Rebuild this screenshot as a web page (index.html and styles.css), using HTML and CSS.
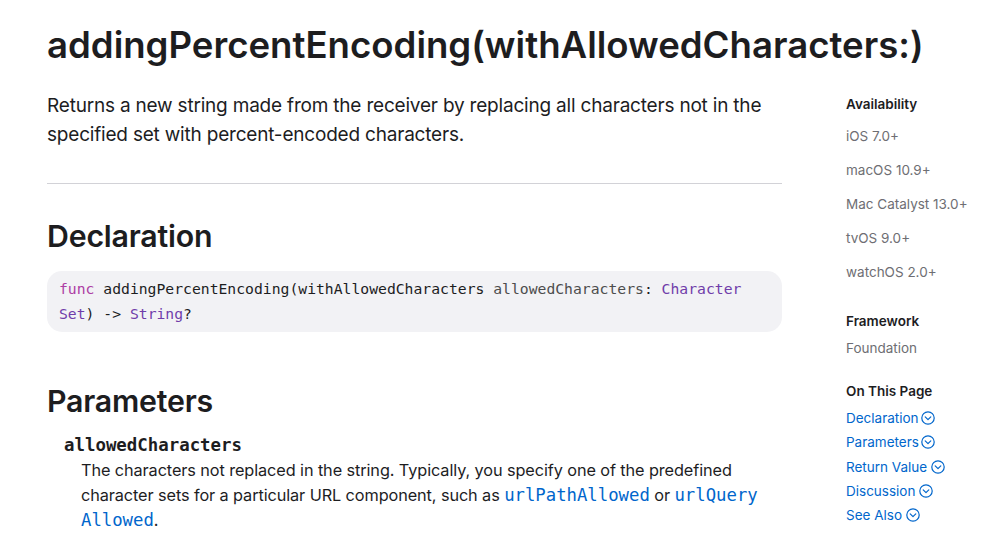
FILE: index.html
```html
<!DOCTYPE html>
<html lang="en">
<head>
<meta charset="utf-8">
<title>addingPercentEncoding(withAllowedCharacters:)</title>
<link rel="stylesheet" href="styles.css">
</head>
<body>
<div class="page">
  <h1 class="title">addingPercentEncoding(withAllowedCharacters:)</h1>
  <div class="layout">
    <main class="main">
      <p class="abstract">Returns a new string made from the receiver by replacing all characters not in the specified set with percent-encoded characters.</p>
      <hr class="divider">
      <h2 class="heading">Declaration</h2>
      <pre class="code"><span class="kw">func</span> addingPercentEncoding(withAllowedCharacters <span class="param">allowedCharacters</span>: <span class="type">Character</span>
<span class="type">Set</span>) -&gt; <span class="type">String</span>?</pre>
      <h2 class="heading heading-params">Parameters</h2>
      <div class="param-name">allowedCharacters</div>
      <p class="param-desc">The characters not replaced in the string. Typically, you specify one of the predefined character sets for a particular URL component, such as <a class="code-link" href="#">urlPathAllowed</a> or <a class="code-link" href="#">urlQuery</a><br><a class="code-link" href="#">Allowed</a>.</p>
    </main>
    <aside class="sidebar">
      <div class="side-group">
        <div class="side-title">Availability</div>
        <ul class="avail">
          <li>iOS 7.0+</li>
          <li>macOS 10.9+</li>
          <li>Mac Catalyst 13.0+</li>
          <li>tvOS 9.0+</li>
          <li>watchOS 2.0+</li>
        </ul>
      </div>
      <div class="side-group side-group-fw">
        <div class="side-title">Framework</div>
        <div class="side-text">Foundation</div>
      </div>
      <div class="side-group">
        <div class="side-title">On This Page</div>
        <ul class="toc">
          <li><a href="#">Declaration<svg class="chev" viewBox="0 0 14 14"><circle cx="7" cy="7" r="6.2"/><path d="M4.2 5.8 L7 8.6 L9.8 5.8"/></svg></a></li>
          <li><a href="#">Parameters<svg class="chev" viewBox="0 0 14 14"><circle cx="7" cy="7" r="6.2"/><path d="M4.2 5.8 L7 8.6 L9.8 5.8"/></svg></a></li>
          <li><a href="#">Return Value<svg class="chev chev-sp" viewBox="0 0 14 14"><circle cx="7" cy="7" r="6.2"/><path d="M4.2 5.8 L7 8.6 L9.8 5.8"/></svg></a></li>
          <li><a href="#">Discussion<svg class="chev chev-sp" viewBox="0 0 14 14"><circle cx="7" cy="7" r="6.2"/><path d="M4.2 5.8 L7 8.6 L9.8 5.8"/></svg></a></li>
          <li><a href="#">See Also<svg class="chev chev-sp" viewBox="0 0 14 14"><circle cx="7" cy="7" r="6.2"/><path d="M4.2 5.8 L7 8.6 L9.8 5.8"/></svg></a></li>
        </ul>
      </div>
    </aside>
  </div>
</div>
</body>
</html>
```

FILE: styles.css
```css
* { box-sizing: border-box; }
html, body { margin: 0; padding: 0; background: #fff; }
body {
  font-family: Inter, "Noto Sans", "Liberation Sans", sans-serif;
  color: #1d1d1f;
  overflow: hidden;
}
.page {
  padding: 20px 0 0 47px;
}
.title {
  margin: 0;
  font-size: 36.6px;
  line-height: 50px;
  font-weight: 600;
  letter-spacing: 0;
  color: #1d1d1f;
}
.layout {
  display: flex;
  gap: 64px;
  margin-top: 21px;
}
.main {
  width: 735px;
  flex: none;
}
.abstract {
  margin: 0;
  font-size: 19px;
  line-height: 29px;
  letter-spacing: -0.2px;
  color: #1d1d1f;
}
.divider {
  border: 0;
  border-top: 1px solid #d2d2d7;
  margin: 34px 0 0;
}
.heading {
  margin: 32px 0 0;
  font-size: 30.3px;
  line-height: 40px;
  font-weight: 600;
  letter-spacing: -0.2px;
}
.code {
  margin: 15px 0 0;
  background: #f2f2f5;
  border-radius: 15px;
  padding: 5px 12px 6px;
  font-family: "DejaVu Sans Mono", "Liberation Mono", monospace;
  font-size: 14.73px;
  line-height: 25px;
  color: #1d1d1f;
  white-space: pre;
}
.kw { color: #ad3da4; }
.type { color: #703daa; }
.param { color: #4d4d4d; }
.heading-params { margin-top: 49px; }
.param-name {
  margin: 12px 0 0 17px;
  font-family: "DejaVu Sans Mono", "Liberation Mono", monospace;
  font-weight: bold;
  font-size: 17.4px;
  line-height: 25px;
}
.param-desc {
  margin: 0 0 0 34px;
  font-size: 16.3px;
  line-height: 25px;
  letter-spacing: -0.1px;
}
.code-link {
  font-family: "DejaVu Sans Mono", "Liberation Mono", monospace;
  font-size: 17.3px;
  line-height: 1;
  letter-spacing: 0;
  color: #0066cc;
  text-decoration: none;
}
.sidebar {
  width: 140px;
  flex: none;
  padding-top: 4px;
}
.side-group { margin-bottom: 31px; }
.side-group-fw { margin-bottom: 25px; }
.side-title {
  font-size: 13.5px;
  line-height: 18px;
  font-weight: 600;
  color: #1d1d1f;
}
.avail, .toc {
  list-style: none;
  margin: 0;
  padding: 0;
}
.avail { margin-top: -2px; }
.avail li {
  margin-top: 16px;
  font-size: 13.5px;
  line-height: 18px;
  color: #6e6e73;
}
.side-text {
  margin-top: 9px;
  font-size: 13.5px;
  line-height: 18px;
  color: #6e6e73;
}
.toc { margin-top: 6px; }
.toc li {
  font-size: 13.5px;
  line-height: 24.3px;
}
.toc a {
  color: #0066cc;
  text-decoration: none;
  display: inline-flex;
  align-items: center;
}
.chev {
  width: 14px;
  height: 14px;
  margin-left: 2px;
  fill: none;
  stroke: #0066cc;
  stroke-width: 1.2;
  stroke-linecap: round;
  stroke-linejoin: round;
}
.chev-sp { margin-left: 4px; }
```
